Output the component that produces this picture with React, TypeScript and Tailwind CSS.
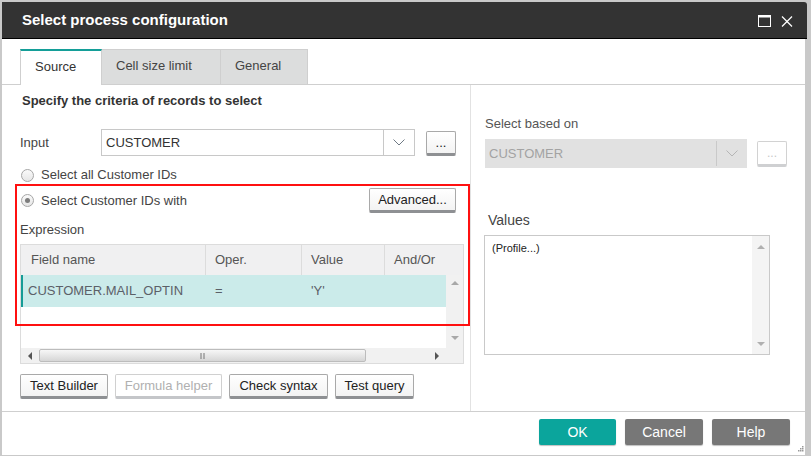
import React from 'react';

const Chevron = ({ color = '#777' }: { color?: string }) => (
  <svg width="12" height="7" viewBox="0 0 12 7">
    <polyline points="0.5,0.5 6,6 11.5,0.5" fill="none" stroke={color} strokeWidth="1" />
  </svg>
);

const Tri = ({ dir, color = '#999' }: { dir: 'up' | 'down' | 'left' | 'right'; color?: string }) => {
  const pts = {
    up: '0,4 4,0 8,4',
    down: '0,0 8,0 4,4',
    left: '4,0 4,8 0,4',
    right: '0,0 0,8 4,4',
  }[dir];
  const horiz = dir === 'left' || dir === 'right';
  return (
    <svg width={horiz ? 4 : 8} height={horiz ? 8 : 4} viewBox={horiz ? '0 0 4 8' : '0 0 8 4'}>
      <polygon points={pts} fill={color} />
    </svg>
  );
};

const Btn = ({ label, w, disabled }: { label: string; w: string; disabled?: boolean }) => (
  <button
    className={
      disabled
        ? `${w} h-[25px] rounded-[2px] border border-[#d0d0d0] border-b-[3px] border-b-[#c4c6c9] bg-white text-[13px] text-[#b0b0b0] leading-none`
        : `${w} h-[25px] rounded-[2px] border border-[#a9a9a9] border-b-[3px] border-b-[#8e9093] bg-gradient-to-b from-white to-[#f3f3f3] text-[13px] text-[#222] leading-none`
    }
  >
    {label}
  </button>
);

const Radio = ({ checked }: { checked?: boolean }) => (
  <span className="w-[13px] h-[13px] rounded-full border border-[#a6a6a6] bg-gradient-to-b from-[#fafafa] to-[#e6e6e6] flex items-center justify-center">
    {checked && <span className="w-[5px] h-[5px] rounded-full bg-[#7d7d7d]" />}
  </span>
);

export default function App() {
  return (
    <div className="relative w-[811px] h-[456px] bg-[#c9c9c9] pt-[2px] pl-[2px] font-['Liberation_Sans',Arial,sans-serif] text-[#333] overflow-hidden">
      <div className="w-[805px] h-[453px] flex flex-col rounded-tr-[3px] overflow-hidden">
        {/* title bar */}
        <div className="h-[37px] bg-[#333333] border-b border-black flex items-center pl-[20px] pr-[14px]">
          <span className="text-white font-bold text-[15px] flex-1">Select process configuration</span>
          <svg width="13" height="12" viewBox="0 0 13 12" className="mr-[10px] mt-[1px]">
            <rect x="0.5" y="0.5" width="12" height="11" fill="none" stroke="#fff" strokeWidth="1" />
            <line x1="0" y1="1.5" x2="13" y2="1.5" stroke="#fff" strokeWidth="2" />
          </svg>
          <svg width="12" height="11" viewBox="0 0 12 11" className="mt-[2px]">
            <line x1="1" y1="0.5" x2="11" y2="10.5" stroke="#fff" strokeWidth="1.3" />
            <line x1="11" y1="0.5" x2="1" y2="10.5" stroke="#fff" strokeWidth="1.3" />
          </svg>
        </div>

        <div className="flex-1 bg-white mr-[2px] flex flex-col">
          {/* tabs */}
          <div className="h-[46px] pt-[10px] pl-[18px] border-b border-[#cfcfcf] flex items-end">
            <div className="w-[82px] h-[36px] -mb-px bg-white border-t-2 border-t-[#149e98] border-x border-x-[#cfcfcf] pl-[14px] pb-[2px] flex items-center text-[13px] text-[#333]">
              Source
            </div>
            <div className="w-[119px] h-[35px] bg-[#dcdddd] border-t border-r border-[#cfcfcf] pl-[14px] pb-[2px] flex items-center text-[13px] text-[#444]">
              Cell size limit
            </div>
            <div className="w-[87px] h-[35px] bg-[#dcdddd] border-t border-r border-[#cfcfcf] pl-[14px] pb-[2px] flex items-center text-[13px] text-[#444]">
              General
            </div>
          </div>

          {/* content */}
          <div className="h-[326px] flex">
            {/* left panel */}
            <div className="w-[469px] border-r border-[#e2e2e2] pl-[18px] flex flex-col">
              <div className="mt-[8px] h-[16px] leading-[16px] pl-[2px] font-bold text-[13px] text-[#333]">
                Specify the criteria of records to select
              </div>

              <div className="mt-[20px] h-[27px] flex items-center">
                <span className="w-[81px] text-[13px] text-[#444]">Input</span>
                <div className="w-[314px] h-[27px] border border-[#c8c8c8] flex">
                  <span className="flex-1 pl-[4px] flex items-center text-[13px] text-[#333]">CUSTOMER</span>
                  <span className="w-[31px] border-l border-[#c8c8c8] flex items-center justify-center">
                    <Chevron color="#6f7a85" />
                  </span>
                </div>
                <div className="ml-[11px]">
                  <Btn label="..." w="w-[30px]" />
                </div>
              </div>

              <div className="mt-[9px] h-[20px] flex items-center gap-[7px] pl-[1px]">
                <Radio />
                <span className="text-[13px] text-[#444]">Select all Customer IDs</span>
              </div>

              <div className="mt-[3px] h-[25px] flex items-center gap-[7px] pl-[1px] w-[436px]">
                <Radio checked />
                <span className="text-[13px] text-[#444] flex-1">Select Customer IDs with</span>
                <Btn label="Advanced..." w="w-[87px]" />
              </div>

              <div className="mt-[8px] h-[18px] flex items-center text-[13px] text-[#444]">Expression</div>

              {/* table */}
              <div className="mt-[5px] w-[444px] h-[120px] border border-[#dcdcdc] flex flex-col">
                <div className="h-[30px] bg-[#f0f0f1] flex text-[13px] text-[#555]">
                  <div className="w-[184px] pl-[10px] flex items-center">Field name</div>
                  <div className="w-[96px] border-l border-[#dcdcdc] pl-[9px] flex items-center">Oper.</div>
                  <div className="w-[83px] border-l border-[#dcdcdc] pl-[9px] flex items-center">Value</div>
                  <div className="flex-1 border-l border-[#dcdcdc] pl-[9px] flex items-center">And/Or</div>
                </div>
                <div className="h-[73px] flex">
                  <div className="flex-1 bg-white">
                    <div className="h-[32px] bg-[#cbebea] border-l-2 border-[#159c96] flex text-[13px] text-[#5b6068]">
                      <div className="w-[182px] pl-[5px] flex items-center">CUSTOMER.MAIL_OPTIN</div>
                      <div className="w-[96px] pl-[10px] flex items-center">=</div>
                      <div className="flex-1 pl-[10px] flex items-center">'Y'</div>
                    </div>
                  </div>
                  <div className="w-[17px] bg-[#f1f1f1] flex flex-col items-center justify-between pt-[6px] pb-[8px]">
                    <Tri dir="up" color="#a8a8a8" />
                    <Tri dir="down" color="#a8a8a8" />
                  </div>
                </div>
                <div className="h-[15px] flex bg-[#f1f1f1]">
                  <div className="flex-1 flex items-center">
                    <span className="w-[17px] flex justify-center"><Tri dir="left" color="#555" /></span>
                    <div className="w-[327px] h-[13px] ml-[1px] rounded-[2px] border border-[#bcbcbc] bg-gradient-to-b from-[#f7f7f7] to-[#d6d6d6] flex items-center justify-center">
                      <svg width="5" height="6" viewBox="0 0 5 6">
                        <line x1="1" y1="0" x2="1" y2="6" stroke="#777" strokeWidth="1" />
                        <line x1="4" y1="0" x2="4" y2="6" stroke="#777" strokeWidth="1" />
                      </svg>
                    </div>
                    <span className="flex-1 flex justify-end pr-[7px]"><Tri dir="right" color="#555" /></span>
                  </div>
                  <div className="w-[17px]" />
                </div>
              </div>

              <div className="mt-[10px] flex gap-[7px]">
                <Btn label="Text Builder" w="w-[88px]" />
                <Btn label="Formula helper" w="w-[107px]" disabled />
                <Btn label="Check syntax" w="w-[99px]" />
                <Btn label="Test query" w="w-[79px]" />
              </div>
            </div>

            {/* right panel */}
            <div className="flex-1 pl-[14px] flex flex-col">
              <div className="mt-[31px] h-[16px] leading-[16px] text-[13px] text-[#555]">Select based on</div>
              <div className="mt-[7px] flex items-center">
                <div className="w-[262px] h-[29px] bg-[#e1e1e1] flex">
                  <span className="flex-1 pl-[4px] flex items-center text-[13px] text-[#a3a3a3]">CUSTOMER</span>
                  <span className="w-[31px] my-[2px] border-l border-[#c9c9c9] flex items-center justify-center">
                    <Chevron color="#b5b5b5" />
                  </span>
                </div>
                <div className="ml-[10px]">
                  <button className="w-[30px] h-[26px] rounded-[2px] border border-[#d2d2d2] border-b-[3px] border-b-[#cfd0d2] bg-white text-[12px] text-[#c8c8c8] leading-none">
                    ...
                  </button>
                </div>
              </div>
              <div className="mt-[43px] h-[18px] flex items-center pl-[3px] text-[14px] text-[#444]">Values</div>
              <div className="mt-[6px] -ml-[1px] w-[286px] h-[120px] border border-[#c9c9c9] flex">
                <div className="flex-1 pl-[7px] pt-[6px] text-[11px] text-[#222] leading-[13px]">(Profile...)</div>
                <div className="w-[17px] bg-[#f4f4f4] flex flex-col items-center justify-between pt-[9px] pb-[8px]">
                  <Tri dir="up" color="#b0b0b0" />
                  <Tri dir="down" color="#b0b0b0" />
                </div>
              </div>
            </div>
          </div>

          {/* footer */}
          <div className="flex-1 border-t border-[#cfcfcf] flex justify-end items-start pt-[7px] pr-[15px] gap-[9px] relative">
            <button className="w-[77px] h-[26px] rounded-[2px] bg-[#0ba59c] text-white text-[14px] leading-none shadow-[0_1px_1px_rgba(0,0,0,0.25)]">
              OK
            </button>
            <button className="w-[78px] h-[26px] rounded-[2px] bg-[#777777] text-white text-[14px] leading-none shadow-[0_1px_1px_rgba(0,0,0,0.25)]">
              Cancel
            </button>
            <button className="w-[78px] h-[26px] rounded-[2px] bg-[#777777] text-white text-[14px] leading-none shadow-[0_1px_1px_rgba(0,0,0,0.25)]">
              Help
            </button>
            <svg width="7" height="7" viewBox="0 0 7 7" className="absolute right-[1px] bottom-[2px]">
              <rect x="5" y="0" width="1.5" height="1.5" fill="#999" />
              <rect x="3" y="2" width="1.5" height="1.5" fill="#999" />
              <rect x="5" y="2" width="1.5" height="1.5" fill="#999" />
              <rect x="1" y="4" width="1.5" height="1.5" fill="#999" />
              <rect x="3" y="4" width="1.5" height="1.5" fill="#999" />
              <rect x="5" y="4" width="1.5" height="1.5" fill="#999" />
            </svg>
          </div>
        </div>
      </div>

      {/* red annotation box */}
      <div className="absolute left-[15px] top-[184px] w-[455px] h-[142px] border-2 border-[#ff1010] pointer-events-none" />
    </div>
  );
}
